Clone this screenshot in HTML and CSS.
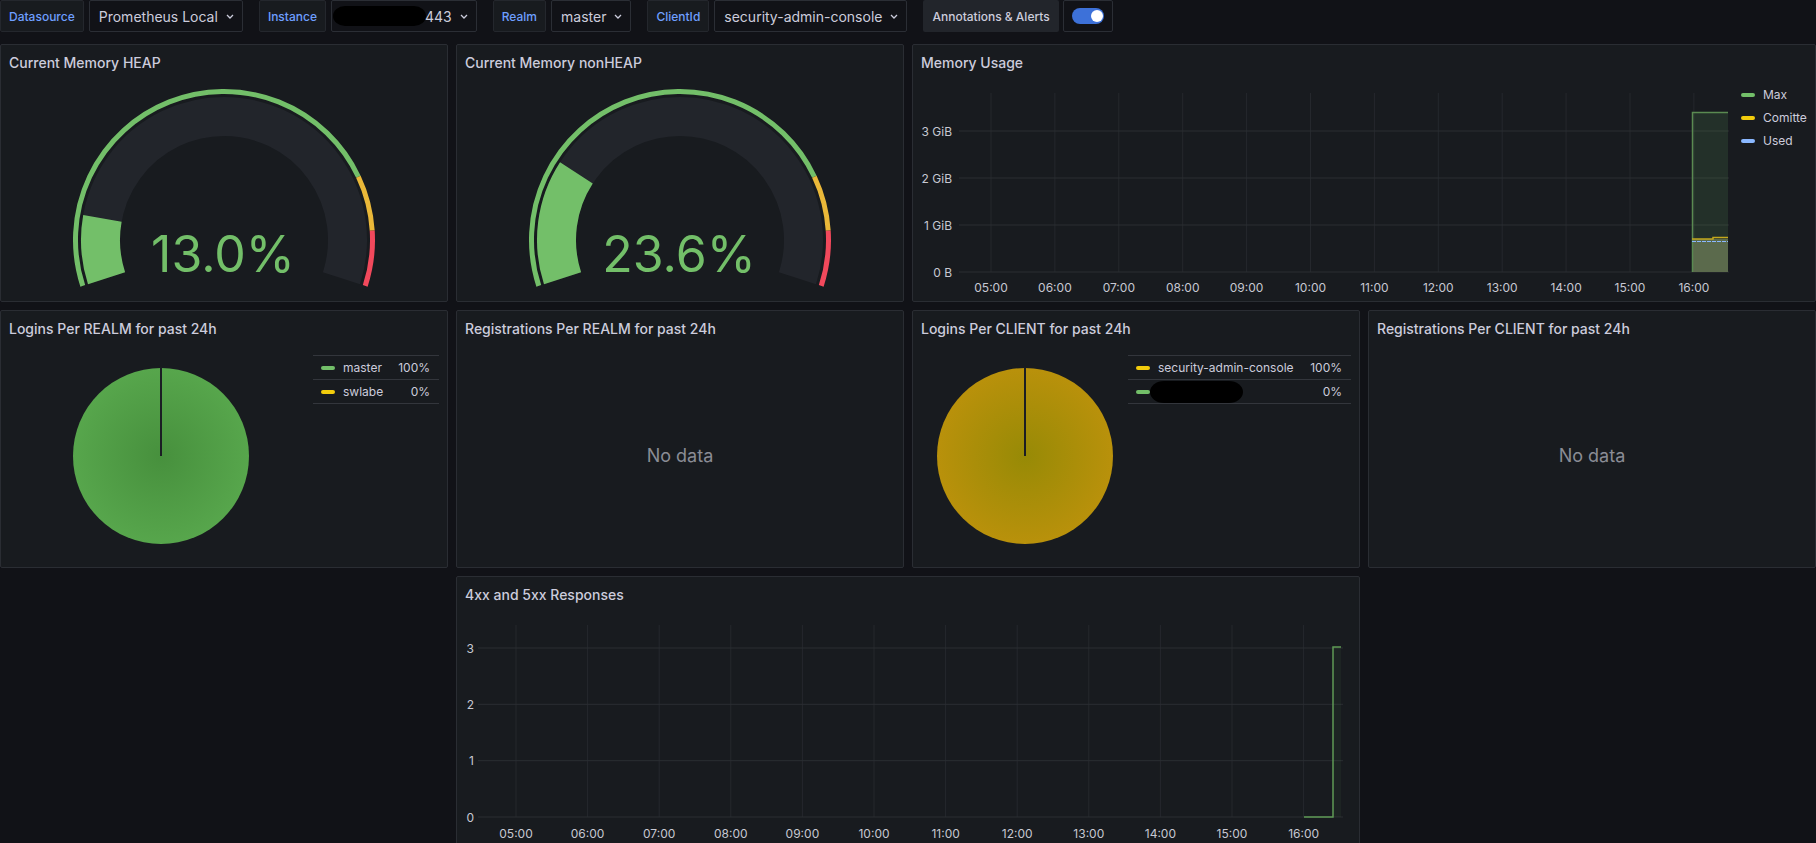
FILE: index.html
```html
<!DOCTYPE html>
<html lang="en">
<head>
<meta charset="utf-8">
<title>Keycloak Metrics</title>
<link rel="stylesheet" href="styles.css">
</head>
<body>
<header class="vars">
  <div class="var">
    <span class="var-label">Datasource</span>
    <span class="var-select">Prometheus Local <svg class="chev" viewBox="0 0 8 5"><path d="M1 1l3 3 3-3"/></svg></span>
  </div>
  <div class="var">
    <span class="var-label">Instance</span>
    <span class="var-select"><span class="redact"></span><span class="port">443</span> <svg class="chev" viewBox="0 0 8 5"><path d="M1 1l3 3 3-3"/></svg></span>
  </div>
  <div class="var">
    <span class="var-label">Realm</span>
    <span class="var-select">master <svg class="chev" viewBox="0 0 8 5"><path d="M1 1l3 3 3-3"/></svg></span>
  </div>
  <div class="var">
    <span class="var-label">ClientId</span>
    <span class="var-select">security-admin-console <svg class="chev" viewBox="0 0 8 5"><path d="M1 1l3 3 3-3"/></svg></span>
  </div>
  <div class="var">
    <span class="ann-label">Annotations &amp; Alerts</span>
    <span class="toggle-box"><span class="switch"></span></span>
  </div>
</header>

<main class="dash">
  <section class="panel">
    <div class="panel-head">Current Memory HEAP</div>
    <div class="panel-body">
      <svg class="fill" viewBox="0 0 446 222">
        <path d="M105.54 199.16 A123.5 123.5 0 1 1 340.46 199.16" class="g-bg"/>
        <path d="M105.54 199.16 A123.5 123.5 0 0 1 101.41 139.38" class="g-val"/>
        <path d="M81.77 206.89 A148.5 148.5 0 0 1 357.37 97.77" class="g-th g-green"/>
        <path d="M357.37 97.77 A148.5 148.5 0 0 1 371.21 151.68" class="g-th g-yellow"/>
        <path d="M371.21 151.68 A148.5 148.5 0 0 1 364.23 206.89" class="g-th g-red"/>
        <text x="222" y="193" class="g-text">13.0%</text>
      </svg>
    </div>
  </section>

  <section class="panel">
    <div class="panel-head">Current Memory nonHEAP</div>
    <div class="panel-body">
      <svg class="fill" viewBox="0 0 446 222">
        <path d="M105.54 199.16 A123.5 123.5 0 1 1 340.46 199.16" class="g-bg"/>
        <path d="M105.54 199.16 A123.5 123.5 0 0 1 119.40 93.78" class="g-val"/>
        <path d="M81.77 206.89 A148.5 148.5 0 0 1 357.37 97.77" class="g-th g-green"/>
        <path d="M357.37 97.77 A148.5 148.5 0 0 1 371.21 151.68" class="g-th g-yellow"/>
        <path d="M371.21 151.68 A148.5 148.5 0 0 1 364.23 206.89" class="g-th g-red"/>
        <text x="222" y="193" class="g-text">23.6%</text>
      </svg>
    </div>
  </section>

  <section class="panel span2">
    <div class="panel-head">Memory Usage</div>
    <div class="panel-body ts-body">
      <svg class="plot" viewBox="0 0 828 222" preserveAspectRatio="xMinYMin meet">
        <g class="vgrid">
          <line x1="78" y1="14" x2="78" y2="193"/>
          <line x1="141.9" y1="14" x2="141.9" y2="193"/>
          <line x1="205.8" y1="14" x2="205.8" y2="193"/>
          <line x1="269.7" y1="14" x2="269.7" y2="193"/>
          <line x1="333.6" y1="14" x2="333.6" y2="193"/>
          <line x1="397.5" y1="14" x2="397.5" y2="193"/>
          <line x1="461.4" y1="14" x2="461.4" y2="193"/>
          <line x1="525.3" y1="14" x2="525.3" y2="193"/>
          <line x1="589.2" y1="14" x2="589.2" y2="193"/>
          <line x1="653.1" y1="14" x2="653.1" y2="193"/>
          <line x1="717" y1="14" x2="717" y2="193"/>
          <line x1="780.9" y1="14" x2="780.9" y2="193"/>
        </g>
        <g class="hgrid">
          <line x1="46" y1="52" x2="816" y2="52"/>
          <line x1="46" y1="99" x2="816" y2="99"/>
          <line x1="46" y1="146" x2="816" y2="146"/>
          <line x1="46" y1="193" x2="816" y2="193"/>
        </g>
        <g class="ylab">
          <text x="39" y="52">3 GiB</text>
          <text x="39" y="99">2 GiB</text>
          <text x="39" y="146">1 GiB</text>
          <text x="39" y="193">0 B</text>
        </g>
        <g class="xlab">
          <text x="78" y="208">05:00</text>
          <text x="141.9" y="208">06:00</text>
          <text x="205.8" y="208">07:00</text>
          <text x="269.7" y="208">08:00</text>
          <text x="333.6" y="208">09:00</text>
          <text x="397.5" y="208">10:00</text>
          <text x="461.4" y="208">11:00</text>
          <text x="525.3" y="208">12:00</text>
          <text x="589.2" y="208">13:00</text>
          <text x="653.1" y="208">14:00</text>
          <text x="717" y="208">15:00</text>
          <text x="780.9" y="208">16:00</text>
        </g>
        <rect x="779" y="33.5" width="36" height="159.5" class="area-max"/>
        <rect x="779" y="160" width="36" height="33" class="area-low"/>
        <path d="M779.5 193 V33.5 H815" class="ln-max"/>
        <path d="M779 160 H800 V158.5 H815" class="ln-com"/>
        <path d="M779 162.5 H815" class="ln-used"/>
      </svg>
      <div class="ts-legend">
        <div class="ts-li"><i class="sw sw-green"></i>Max</div>
        <div class="ts-li"><i class="sw sw-yellow"></i>Comitted</div>
        <div class="ts-li"><i class="sw sw-blue"></i>Used</div>
      </div>
    </div>
  </section>

  <section class="panel">
    <div class="panel-head">Logins Per REALM for past 24h</div>
    <div class="panel-body pie-body">
      <div class="pie-area">
        <svg class="pie" viewBox="-90 -90 180 180">
          <defs>
            <radialGradient id="pieGreen">
              <stop offset="0" stop-color="#47903d"/>
              <stop offset="1" stop-color="#57a64c"/>
            </radialGradient>
          </defs>
          <circle r="88" fill="url(#pieGreen)"/>
          <line x1="0" y1="0" x2="0" y2="-89" class="pie-sep"/>
        </svg>
      </div>
      <div class="pie-legend lg-realm">
        <div class="lg-row"><i class="sw sw-green"></i><span class="lg-name">master</span><span class="lg-val">100%</span></div>
        <div class="lg-row"><i class="sw sw-yellow"></i><span class="lg-name">swlabe</span><span class="lg-val">0%</span></div>
      </div>
    </div>
  </section>

  <section class="panel">
    <div class="panel-head">Registrations Per REALM for past 24h</div>
    <div class="panel-body nodata">No data</div>
  </section>

  <section class="panel">
    <div class="panel-head">Logins Per CLIENT for past 24h</div>
    <div class="panel-body pie-body">
      <div class="pie-area">
        <svg class="pie" viewBox="-90 -90 180 180">
          <defs>
            <radialGradient id="pieYellow">
              <stop offset="0" stop-color="#978a06"/>
              <stop offset="1" stop-color="#b9910b"/>
            </radialGradient>
          </defs>
          <circle r="88" fill="url(#pieYellow)"/>
          <line x1="0" y1="0" x2="0" y2="-89" class="pie-sep"/>
        </svg>
      </div>
      <div class="pie-legend lg-client">
        <div class="lg-row"><i class="sw sw-yellow"></i><span class="lg-name">security-admin-console</span><span class="lg-val">100%</span></div>
        <div class="lg-row"><i class="sw sw-green"></i><span class="lg-name"><span class="redact redact-lg"></span></span><span class="lg-val">0%</span></div>
      </div>
    </div>
  </section>

  <section class="panel">
    <div class="panel-head">Registrations Per CLIENT for past 24h</div>
    <div class="panel-body nodata">No data</div>
  </section>

  <section class="panel span2 row3">
    <div class="panel-head">4xx and 5xx Responses</div>
    <div class="panel-body">
      <svg class="plot4" viewBox="0 0 902 264" preserveAspectRatio="xMinYMin meet">
        <g class="vgrid">
          <line x1="59" y1="14" x2="59" y2="206"/>
          <line x1="130.6" y1="14" x2="130.6" y2="206"/>
          <line x1="202.2" y1="14" x2="202.2" y2="206"/>
          <line x1="273.8" y1="14" x2="273.8" y2="206"/>
          <line x1="345.4" y1="14" x2="345.4" y2="206"/>
          <line x1="417" y1="14" x2="417" y2="206"/>
          <line x1="488.6" y1="14" x2="488.6" y2="206"/>
          <line x1="560.2" y1="14" x2="560.2" y2="206"/>
          <line x1="631.8" y1="14" x2="631.8" y2="206"/>
          <line x1="703.4" y1="14" x2="703.4" y2="206"/>
          <line x1="775" y1="14" x2="775" y2="206"/>
          <line x1="846.6" y1="14" x2="846.6" y2="206"/>
        </g>
        <g class="hgrid">
          <line x1="21" y1="37" x2="886" y2="37"/>
          <line x1="21" y1="93.3" x2="886" y2="93.3"/>
          <line x1="21" y1="149.7" x2="886" y2="149.7"/>
          <line x1="21" y1="206" x2="886" y2="206"/>
        </g>
        <g class="ylab">
          <text x="17" y="37">3</text>
          <text x="17" y="93.3">2</text>
          <text x="17" y="149.7">1</text>
          <text x="17" y="206">0</text>
        </g>
        <g class="xlab">
          <text x="59" y="222">05:00</text>
          <text x="130.6" y="222">06:00</text>
          <text x="202.2" y="222">07:00</text>
          <text x="273.8" y="222">08:00</text>
          <text x="345.4" y="222">09:00</text>
          <text x="417" y="222">10:00</text>
          <text x="488.6" y="222">11:00</text>
          <text x="560.2" y="222">12:00</text>
          <text x="631.8" y="222">13:00</text>
          <text x="703.4" y="222">14:00</text>
          <text x="775" y="222">15:00</text>
          <text x="846.6" y="222">16:00</text>
        </g>
        <rect x="876" y="36" width="8" height="170" class="area-4xx"/>
        <path d="M847 206 H876 V36 H884" class="ln-4xx"/>
      </svg>
    </div>
  </section>
</main>
</body>
</html>
```

FILE: styles.css
```css
html, body {
  margin: 0;
  padding: 0;
  height: 100%;
  overflow: hidden;
  background: #111217;
  color: #ccccdc;
  font-family: Inter, "Noto Sans", "Liberation Sans", sans-serif;
}

/* ---------- variables bar ---------- */
.vars {
  display: flex;
  height: 32px;
}
.var {
  display: flex;
  gap: 5px;
  margin-right: 16px;
}
.var-label {
  display: flex;
  align-items: center;
  padding: 0 8px;
  background: #181b1f;
  border: 1px solid #24272d;
  border-radius: 2px;
  color: #6e9fff;
  font-size: 12px;
  font-weight: 500;
}
.var-select {
  display: flex;
  align-items: center;
  gap: 8px;
  padding: 0 8px 0 9px;
  background: #111217;
  border: 1px solid #2b2e35;
  border-radius: 2px;
  color: #ccccdc;
  font-size: 14px;
}
.chev {
  width: 8px;
  height: 5px;
  fill: none;
  stroke: #ccccdc;
  stroke-width: 1.3;
}
.redact {
  display: inline-block;
  width: 93px;
  height: 20px;
  background: #000;
  border-radius: 12px / 10px;
  margin-left: -8px;
}
.port {
  margin-left: -9px;
}
.ann-label {
  display: flex;
  align-items: center;
  padding: 0 9px;
  background: #22252b;
  border-radius: 2px;
  font-size: 12px;
  font-weight: 500;
  color: #ccccdc;
}
.var:last-child { gap: 4px; }
.toggle-box {
  display: flex;
  align-items: center;
  padding: 0 8px;
  border: 1px solid #2b2e35;
  border-radius: 2px;
}
.switch {
  position: relative;
  width: 32px;
  height: 16px;
  border-radius: 8px;
  background: #3d71d9;
}
.switch::after {
  content: "";
  position: absolute;
  right: 1px;
  top: 2px;
  width: 12px;
  height: 12px;
  border-radius: 50%;
  background: #fff;
}

/* ---------- dashboard grid ---------- */
.dash {
  display: grid;
  grid-template-columns: repeat(4, 448px);
  grid-template-rows: 258px 258px 300px;
  gap: 8px;
  margin-top: 12px;
}
.span2 { grid-column: span 2; }
.row3 { grid-column: 2 / span 2; grid-row: 3; }

.panel {
  box-sizing: border-box;
  display: flex;
  flex-direction: column;
  background: #181b1f;
  border: 1px solid #2a2d33;
  border-radius: 2px;
  overflow: hidden;
}
.panel-head {
  flex: none;
  height: 34px;
  display: flex;
  align-items: center;
  padding: 0 8px;
  font-size: 14px;
  font-weight: 500;
  color: #ccccdc;
  white-space: nowrap;
}
.panel-body {
  flex: 1;
  min-height: 0;
}
.fill {
  display: block;
  width: 100%;
  height: 100%;
}

/* ---------- gauges ---------- */
.g-bg { fill: none; stroke: #22252b; stroke-width: 39; }
.g-val { fill: none; stroke: #73bf69; stroke-width: 39; }
.g-th { fill: none; stroke-width: 5; }
.g-green { stroke: #73bf69; }
.g-yellow { stroke: #eab839; }
.g-red { stroke: #f2495c; }
.g-text {
  fill: #73bf69;
  font-family: Inter, "Noto Sans", sans-serif;
  font-size: 50px;
  font-weight: 400;
  text-anchor: middle;
}

/* ---------- time series ---------- */
.ts-body {
  display: flex;
}
.plot {
  display: block;
  width: 828px;
  height: 222px;
  flex: none;
}
.plot4 {
  display: block;
  width: 902px;
  height: 264px;
}
.vgrid line { stroke: #25282d; stroke-width: 1; }
.hgrid line { stroke: #2b2e33; stroke-width: 1; }
.ylab text, .xlab text {
  fill: #c7c8d2;
  font-family: Inter, "Noto Sans", sans-serif;
  font-size: 12px;
  dominant-baseline: central;
}
.ylab text { text-anchor: end; }
.xlab text { text-anchor: middle; }
.area-max { fill: #73bf69; fill-opacity: 0.13; }
.area-low { fill: #5b6a4c; }
.ln-max { fill: none; stroke: #5a8a51; stroke-width: 1.5; }
.ln-com { fill: none; stroke: #c4a81c; stroke-width: 1.5; }
.ln-used { fill: none; stroke: #8ab8ff; stroke-width: 1.2; stroke-dasharray: 4 1; }
.area-4xx { fill: #73bf69; fill-opacity: 0.06; }
.ln-4xx { fill: none; stroke: #5f9a56; stroke-width: 1.5; }

.ts-legend {
  flex: 1;
  min-width: 0;
  padding-top: 4px;
  padding-right: 8px;
}
.ts-li {
  display: flex;
  align-items: center;
  gap: 8px;
  height: 23px;
  overflow: hidden;
  font-size: 12px;
  white-space: nowrap;
  color: #ccccdc;
}

.sw {
  flex: none;
  display: inline-block;
  width: 14px;
  height: 4px;
  border-radius: 2px;
}
.sw-green { background: #73bf69; }
.sw-yellow { background: #f2cc0c; }
.sw-blue { background: #8ab8ff; }

/* ---------- pie charts ---------- */
.pie-body {
  display: flex;
}
.pie-area {
  flex: 1;
  display: flex;
  align-items: center;
  justify-content: center;
  padding-left: 8px;
}
.pie {
  width: 180px;
  height: 180px;
  display: block;
}
.pie-sep { stroke: #1b1e24; stroke-width: 2; }
.pie-legend {
  flex: none;
  align-self: flex-start;
  margin: 10px 8px 0 0;
  border-top: 1px solid #33363c;
}
.lg-realm { width: 126px; }
.lg-client { width: 223px; }
.lg-row {
  box-sizing: border-box;
  display: flex;
  align-items: center;
  gap: 8px;
  height: 24px;
  padding: 0 9px 0 8px;
  border-bottom: 1px solid #33363c;
  font-size: 12px;
  color: #ccccdc;
  white-space: nowrap;
}
.lg-name {
  flex: 1;
  display: flex;
  align-items: center;
}
.lg-val { text-align: right; }
.redact-lg {
  width: 93px;
  height: 22px;
  border-radius: 14px / 11px;
  margin-left: -8px;
}

/* ---------- no data ---------- */
.nodata {
  display: flex;
  align-items: center;
  justify-content: center;
  font-size: 18px;
  color: #8a8c95;
  padding-bottom: 2px;
}
```
